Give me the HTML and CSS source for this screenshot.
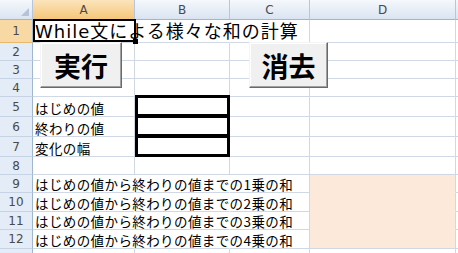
FILE: index.html
```html
<!DOCTYPE html>
<html lang="ja">
<head>
    <meta charset="UTF-8">
    <title>While文による様々な和の計算</title>
    <link rel="stylesheet" href="styles.css">
</head>
<body>
    <div class="sheet">
        <!-- column headers -->
        <div class="hd corner">
            <svg width="8" height="8" viewBox="0 0 8 8"><polygon points="8,0 8,8 0,8" fill="#b4c4d8"/></svg>
        </div>
        <div class="hd on">A</div>
        <div class="hd">B</div>
        <div class="hd">C</div>
        <div class="hd">D</div>
        <div class="hd"></div>

        <!-- row 1 -->
        <div class="rh on">1</div>
        <div class="c sel title">While文による様々な和の計算</div>
        <div class="c ov"></div>
        <div class="c"></div>
        <div class="c"></div>
        <div class="c"></div>

        <div class="rh">2</div>
        <div class="c"></div><div class="c"></div><div class="c"></div><div class="c"></div><div class="c"></div>
        <div class="rh">3</div>
        <div class="c"></div><div class="c"></div><div class="c"></div><div class="c"></div><div class="c"></div>
        <div class="rh">4</div>
        <div class="c"></div><div class="c"></div><div class="c"></div><div class="c"></div><div class="c"></div>

        <!-- inputs -->
        <div class="rh">5</div>
        <div class="c">はじめの値</div><div class="c box"></div><div class="c"></div><div class="c"></div><div class="c"></div>
        <div class="rh">6</div>
        <div class="c">終わりの値</div><div class="c box"></div><div class="c"></div><div class="c"></div><div class="c"></div>
        <div class="rh">7</div>
        <div class="c">変化の幅</div><div class="c box"></div><div class="c"></div><div class="c"></div><div class="c"></div>

        <div class="rh">8</div>
        <div class="c"></div><div class="c"></div><div class="c"></div><div class="c"></div><div class="c"></div>

        <!-- results -->
        <div class="rh">9</div>
        <div class="c ov">はじめの値から終わりの値までの1乗の和</div><div class="c ov"></div><div class="c"></div><div class="c fill"></div><div class="c"></div>
        <div class="rh">10</div>
        <div class="c ov">はじめの値から終わりの値までの2乗の和</div><div class="c ov"></div><div class="c"></div><div class="c fill"></div><div class="c"></div>
        <div class="rh">11</div>
        <div class="c ov">はじめの値から終わりの値までの3乗の和</div><div class="c ov"></div><div class="c"></div><div class="c fill"></div><div class="c"></div>
        <div class="rh">12</div>
        <div class="c ov">はじめの値から終わりの値までの4乗の和</div><div class="c ov"></div><div class="c"></div><div class="c fill last"></div><div class="c"></div>

        <div class="rh"></div>
        <div class="c"></div><div class="c"></div><div class="c"></div><div class="c"></div><div class="c"></div>

        <!-- form buttons -->
        <button class="btn run">実行</button>
        <button class="btn clear">消去</button>
    </div>
</body>
</html>
```

FILE: styles.css
```css
body {
    margin: 0;
    background: #fff;
    overflow: hidden;
    font-family: "Noto Sans CJK JP", sans-serif;
}

.sheet {
    position: relative;
    display: grid;
    grid-template-columns: 33px 102px 95px 80px 146px 80px;
    grid-template-rows: 20px 23px 18px 18px 18px 20px 20px 20px 18px 18px 19px 18px 19px 18px;
    width: max-content;
}

.hd,
.rh {
    box-sizing: border-box;
    display: flex;
    align-items: center;
    justify-content: center;
    font-family: "DejaVu Sans", sans-serif;
    font-size: 12px;
    color: #4a4a4a;
    overflow: hidden;
}

.hd {
    background: linear-gradient(#f5f8fc, #dae4f1);
    border-right: 1px solid #b6c7dc;
    border-bottom: 1px solid #9eb6ce;
}

.hd.on {
    background: linear-gradient(#fbe4bb, #f5c67a);
    border-bottom-color: #e6ac5a;
}

.corner {
    justify-content: flex-end;
    align-items: flex-end;
    padding: 0 3px 3px 0;
}

.corner svg {
    display: block;
}

.rh {
    background: #e4ecf7;
    border-right: 1px solid #9eb6ce;
    border-bottom: 1px solid #c5d3e4;
}

.rh.on {
    background: #f9d9a3;
    border-bottom-color: #e9b86c;
}

.c {
    box-sizing: border-box;
    min-width: 0;
    display: flex;
    align-items: flex-end;
    padding: 0 2px 1px;
    border-right: 1px solid #d0d7e5;
    border-bottom: 1px solid #d0d7e5;
    font-size: 13.5px;
    letter-spacing: 0.4px;
    line-height: 1;
    white-space: nowrap;
    color: #000;
}

.c.ov {
    border-right-color: transparent;
}

.title {
    font-family: "DejaVu Sans", "Noto Sans CJK JP", sans-serif;
    font-size: 18px;
    letter-spacing: 1px;
    border-right-color: transparent;
}

.sel {
    position: relative;
}

.sel::after {
    content: "";
    position: absolute;
    left: 0;
    top: -1px;
    right: -2px;
    bottom: 0;
    border: 2px solid #000;
}

.sel::before {
    content: "";
    position: absolute;
    right: -4px;
    bottom: -2px;
    width: 5px;
    height: 5px;
    background: #000;
    z-index: 1;
}

.box {
    position: relative;
}

.box::after {
    content: "";
    position: absolute;
    left: 0;
    top: -2px;
    right: -1px;
    bottom: -1px;
    border: 3px solid #000;
}

.fill {
    background: #fde9d9;
    border-bottom-color: #fde9d9;
}

.fill.last {
    border-bottom-color: #d0d7e5;
}

.btn {
    position: absolute;
    top: 42px;
    height: 46px;
    box-sizing: border-box;
    display: flex;
    align-items: center;
    justify-content: center;
    padding: 0;
    background: #f0f0f0;
    border: 1px solid;
    border-color: #f4f4f4 #696969 #696969 #f4f4f4;
    box-shadow: inset -1px -1px #a0a0a0, inset 1px 1px #fff;
    font-family: "Noto Sans CJK JP", sans-serif;
    font-size: 27px;
    font-weight: bold;
    color: #000;
}

.run {
    left: 40px;
    width: 82px;
}

.clear {
    left: 249px;
    width: 79px;
}
```
